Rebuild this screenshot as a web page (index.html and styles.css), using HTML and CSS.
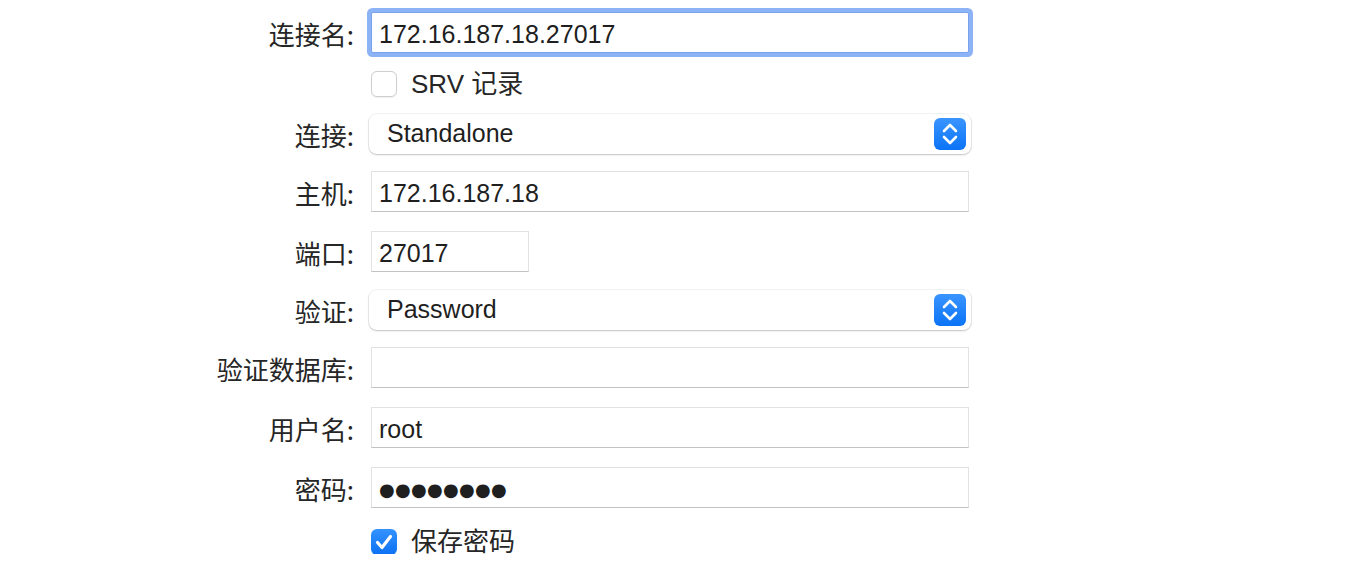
FILE: index.html
```html
<!DOCTYPE html>
<html lang="zh-CN">
<head>
<meta charset="utf-8">
<title>连接</title>
<link rel="stylesheet" href="styles.css">
</head>
<body>
<div class="form">
  <div class="row row--field">
    <div class="label">连接名:</div>
    <div class="field field--focus">172.16.187.18.27017</div>
  </div>
  <div class="row row--check">
    <div class="label"></div>
    <div class="check"><span class="box"></span><span class="check-text">SRV 记录</span></div>
  </div>
  <div class="row row--popup">
    <div class="label">连接:</div>
    <div class="popup">
      <span class="popup-text">Standalone</span>
      <span class="stepper"><svg width="32" height="32" viewBox="0 0 32 32"><path d="M10 13 L16 7 L22 13 M10 19 L16 25 L22 19" fill="none" stroke="#fff" stroke-width="2.6" stroke-linecap="round" stroke-linejoin="round"/></svg></span>
    </div>
  </div>
  <div class="row row--field">
    <div class="label">主机:</div>
    <div class="field">172.16.187.18</div>
  </div>
  <div class="row row--field">
    <div class="label">端口:</div>
    <div class="field field--short">27017</div>
  </div>
  <div class="row row--popup">
    <div class="label">验证:</div>
    <div class="popup">
      <span class="popup-text">Password</span>
      <span class="stepper"><svg width="32" height="32" viewBox="0 0 32 32"><path d="M10 13 L16 7 L22 13 M10 19 L16 25 L22 19" fill="none" stroke="#fff" stroke-width="2.6" stroke-linecap="round" stroke-linejoin="round"/></svg></span>
    </div>
  </div>
  <div class="row row--field">
    <div class="label">验证数据库:</div>
    <div class="field"></div>
  </div>
  <div class="row row--field">
    <div class="label">用户名:</div>
    <div class="field">root</div>
  </div>
  <div class="row row--field">
    <div class="label">密码:</div>
    <div class="field"><span class="dots">●●●●●●●●</span></div>
  </div>
  <div class="row row--check row--last">
    <div class="label"></div>
    <div class="check"><span class="box box--checked"><svg width="26" height="26" viewBox="0 0 26 26"><path d="M6.5 13.5 L11 18.5 L19.5 7.5" fill="none" stroke="#fff" stroke-width="3.2" stroke-linecap="round" stroke-linejoin="round"/></svg></span><span class="check-text">保存密码</span></div>
  </div>
</div>
</body>
</html>
```

FILE: styles.css
```css
html, body {
  margin: 0;
  background: #fff;
}
body {
  font-family: "Liberation Sans", "Noto Sans CJK SC", sans-serif;
  color: #222;
}
.form {
  display: flex;
  flex-direction: column;
  gap: 19px;
  padding-top: 12px;
}
.row {
  display: flex;
  align-items: center;
  gap: 17px;
}
.row--field { height: 41px; }
.row--popup { height: 37px; }
.row--check { height: 24px; }
.row--last { margin-top: 3px; }
.label {
  flex: none;
  width: 354px;
  text-align: right;
  font-family: "Noto Sans CJK SC", sans-serif;
  font-size: 26px;
  line-height: 30px;
  padding-top: 2px;
  color: #262626;
}
.field {
  flex: none;
  width: 598px;
  height: 41px;
  box-sizing: border-box;
  border: 1px solid #e2e2e2;
  border-bottom-color: #c2c2c2;
  padding: 4px 7px 0;
  font-size: 25px;
  display: flex;
  align-items: center;
  background: #fff;
  color: #1f1f1f;
}
.field--short { width: 158px; }
.field--focus {
  border-color: #7aa3ee;
  border-radius: 2px;
  box-shadow: 0 0 0 4px #8cb3f6;
}
.popup {
  flex: none;
  margin-left: -2px;
  width: 602px;
  height: 40px;
  box-sizing: border-box;
  border-radius: 8px;
  background: #fff;
  box-shadow: 0 0 0 1px rgba(0, 0, 0, 0.05), 0 1px 2px rgba(0, 0, 0, 0.2);
  display: flex;
  align-items: center;
  justify-content: space-between;
  padding: 0 5px 0 18px;
  font-size: 25px;
  color: #1f1f1f;
}
.stepper {
  width: 32px;
  height: 32px;
  border-radius: 6px;
  background: linear-gradient(#3a95ff, #0a73f6);
  display: flex;
}
.check {
  display: flex;
  align-items: center;
  gap: 14px;
}
.box {
  flex: none;
  width: 26px;
  height: 26px;
  box-sizing: border-box;
  border: 1px solid #cfcfcf;
  border-radius: 6px;
  background: #fff;
  box-shadow: 0 0.5px 1px rgba(0, 0, 0, 0.06);
  display: flex;
  align-items: center;
  justify-content: center;
}
.box--checked {
  border: none;
  background: linear-gradient(#3593ff, #0b71f3);
}
.check-text {
  font-size: 26px;
  line-height: 30px;
  font-family: "Liberation Sans", "Noto Sans CJK SC", sans-serif;
  color: #262626;
}
.dots {
  font-family: "DejaVu Sans", sans-serif;
  font-size: 18px;
  letter-spacing: 0.3px;
  color: #1f1f1f;
}
```
